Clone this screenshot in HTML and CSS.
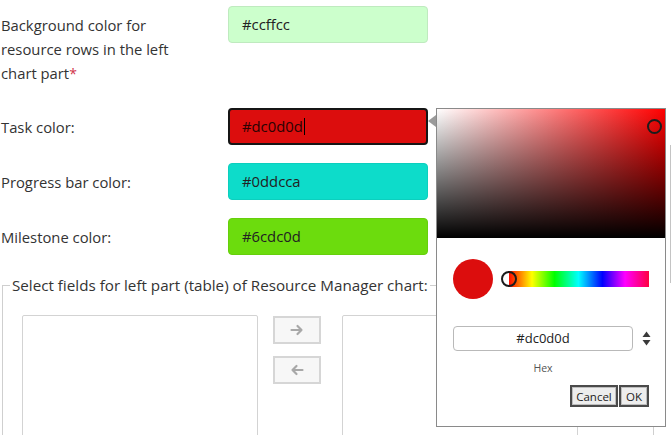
FILE: index.html
```html
<!DOCTYPE html>
<html lang="en">
<head>
<meta charset="utf-8">
<title>Resource Manager colors</title>
<link rel="stylesheet" href="styles.css">
</head>
<body>
<div class="page">
  <div class="form">
    <div class="row">
      <div class="lbl">Background color for resource rows in the left chart part<span class="req">*</span></div>
      <div class="field f-green">#ccffcc</div>
    </div>
    <div class="row">
      <div class="lbl">Task color:</div>
      <div class="field f-red">#dc0d0d<span class="caret"></span></div>
    </div>
    <div class="row">
      <div class="lbl">Progress bar color:</div>
      <div class="field f-cyan">#0ddcca</div>
    </div>
    <div class="row">
      <div class="lbl">Milestone color:</div>
      <div class="field f-lime">#6cdc0d</div>
    </div>
  </div>

  <fieldset class="fields">
    <legend>Select fields for left part (table) of Resource Manager chart:</legend>
    <div class="dual">
      <div class="listbox"></div>
      <div class="movers">
        <button class="mv" type="button">
          <svg width="14" height="12" viewBox="0 0 14 12"><path d="M1.5 6H11.5M7.5 2L11.5 6L7.5 10" fill="none" stroke="#a8a8a8" stroke-width="2.2" stroke-linecap="round" stroke-linejoin="round"/></svg>
        </button>
        <button class="mv" type="button">
          <svg width="14" height="12" viewBox="0 0 14 12"><path d="M12.5 6H2.5M6.5 2L2.5 6L6.5 10" fill="none" stroke="#a8a8a8" stroke-width="2.2" stroke-linecap="round" stroke-linejoin="round"/></svg>
        </button>
      </div>
      <div class="listbox"></div>
    </div>
  </fieldset>

  <div class="scroll-edge"></div>

  <div class="picker">
    <div class="sv">
      <span class="sv-thumb"></span>
    </div>
    <div class="preview-row">
      <span class="swatch"></span>
      <div class="hue"><span class="hue-thumb"></span></div>
    </div>
    <div class="hex-row">
      <div class="hex-input">#dc0d0d</div>
      <span class="spin">
        <svg width="9" height="15" viewBox="0 0 9 15"><path d="M4.5 0.5L8.5 6H0.5Z" fill="#3a3a3a"/><path d="M4.5 14.5L8.5 9H0.5Z" fill="#3a3a3a"/></svg>
      </span>
    </div>
    <div class="hex-label">Hex</div>
    <div class="actions">
      <button class="btn btn-cancel" type="button">Cancel</button>
      <button class="btn btn-ok" type="button">OK</button>
    </div>
  </div>
</div>
</body>
</html>
```
FILE: styles.css
```css
* { box-sizing: border-box; }

html, body {
  margin: 0;
  padding: 0;
  background: #fff;
}

body {
  font-family: "Open Sans", "Noto Sans", sans-serif;
  font-size: 14.8px;
  color: #333;
}

.page {
  position: relative;
  width: 672px;
  height: 435px;
  overflow: hidden;
}

.form {
  padding: 6px 0 0 1px;
  display: flex;
  flex-direction: column;
  gap: 18px;
}

.row {
  display: grid;
  grid-template-columns: 227px 200px;
  align-items: start;
}

.lbl {
  width: 185px;
  padding: 7px 0 5px;
  line-height: 24px;
}

.req {
  color: #d0334a;
  font-size: 14px;
  line-height: 0;
}

.field {
  height: 37px;
  border-radius: 4px;
  padding: 0 13px;
  line-height: 35px;
  color: #222;
  border: 1px solid rgba(0, 0, 0, 0.07);
}

.f-green { background: #ccffcc; border-color: #bfeabf; }
.f-red {
  background: #dc0d0d;
  border: 2px solid #151515;
  padding: 0 12px;
  line-height: 33px;
  color: #2a0303;
}
.f-cyan { background: #0ddcca; border-color: #0ccfbe; }
.f-lime { background: #6cdc0d; border-color: #66cf0c; }

.caret {
  display: inline-block;
  width: 1px;
  height: 17px;
  background: #000;
  vertical-align: middle;
  margin-left: 1px;
  margin-top: -3px;
}

.fields {
  margin: 20px 0 0 2px;
  padding: 0 0 0 19px;
  width: 652px;
  height: 200px;
  border: 1px solid #cfcfcf;
  border-bottom: none;
  min-width: 0;
}

.fields legend {
  margin-left: -12px;
  padding: 0 2px;
  line-height: 20px;
  font-size: 15.2px;
  color: #333;
}

.dual {
  display: flex;
  align-items: flex-start;
  padding-top: 20px;
}

.listbox {
  width: 236px;
  height: 160px;
  border: 1px solid #d3d3d3;
  border-radius: 2px;
  background: #fff;
}

.movers {
  display: flex;
  flex-direction: column;
  gap: 12px;
  margin: 1px 21px 0 15px;
}

.mv {
  width: 48px;
  height: 28px;
  padding: 0;
  border: 2px solid #d6d6d6;
  background: #f7f7f7;
  display: flex;
  align-items: center;
  justify-content: center;
}

.scroll-edge {
  position: absolute;
  left: 670px;
  top: 145px;
  width: 1px;
  height: 138px;
  background: #c4c4c4;
}

/* colour picker popup */
.picker {
  position: absolute;
  left: 436px;
  top: 108px;
  width: 230px;
  height: 319px;
  background: #fff;
  border: 1px solid #8a8a8a;
  display: flex;
  flex-direction: column;
}

.picker::before {
  content: "";
  position: absolute;
  left: -9px;
  top: 6px;
  border-right: 8px solid #9a9a9a;
  border-top: 6px solid transparent;
  border-bottom: 6px solid transparent;
}

.sv {
  position: relative;
  height: 129px;
  background:
    linear-gradient(to top, #000, rgba(0, 0, 0, 0)),
    linear-gradient(to right, #fff, #ff0000);
}

.sv-thumb {
  position: absolute;
  left: 210px;
  top: 10px;
  width: 15px;
  height: 15px;
  border: 2px solid #1c1c1c;
  border-radius: 50%;
}

.preview-row {
  display: flex;
  align-items: center;
  gap: 15px;
  padding: 21px 16px 0 16px;
}

.swatch {
  width: 40px;
  height: 40px;
  border-radius: 50%;
  background: #dc0d0d;
  flex: none;
}

.hue {
  position: relative;
  flex: 1;
  height: 16px;
  background: linear-gradient(to right, #ff0000 0%, #ffff00 17%, #00ff00 33%, #00ffff 50%, #0000ff 67%, #ff00ff 83%, #ff0040 100%);
}

.hue-thumb {
  position: absolute;
  left: -7px;
  top: 0px;
  width: 16px;
  height: 16px;
  border: 2px solid #1c1c1c;
  border-radius: 50%;
  background: linear-gradient(to right, #fff 50%, rgba(255, 255, 255, 0) 50%);
}

.hex-row {
  display: flex;
  align-items: center;
  gap: 9px;
  padding: 27px 0 0 16px;
}

.hex-input {
  width: 180px;
  height: 25px;
  border: 1px solid #b9b9b9;
  border-radius: 4px;
  text-align: center;
  font-size: 13px;
  line-height: 23px;
  color: #222;
}

.spin {
  display: flex;
}

.hex-label {
  width: 180px;
  margin-left: 16px;
  margin-top: 10px;
  text-align: center;
  font-size: 10.5px;
  color: #555;
}

.actions {
  display: flex;
  justify-content: flex-end;
  padding: 10px 16px 0 0;
}

.btn {
  height: 22px;
  padding: 0;
  font-family: "Open Sans", "Noto Sans", sans-serif;
  font-size: 11.5px;
  color: #222;
  background: #ededed;
  border: 2px solid #4a4a4a;
  box-shadow: inset 0 0 0 1px #bdbdbd;
}

.btn-cancel { width: 48px; }
.btn-ok { width: 30px; margin-left: 1px; }
```
